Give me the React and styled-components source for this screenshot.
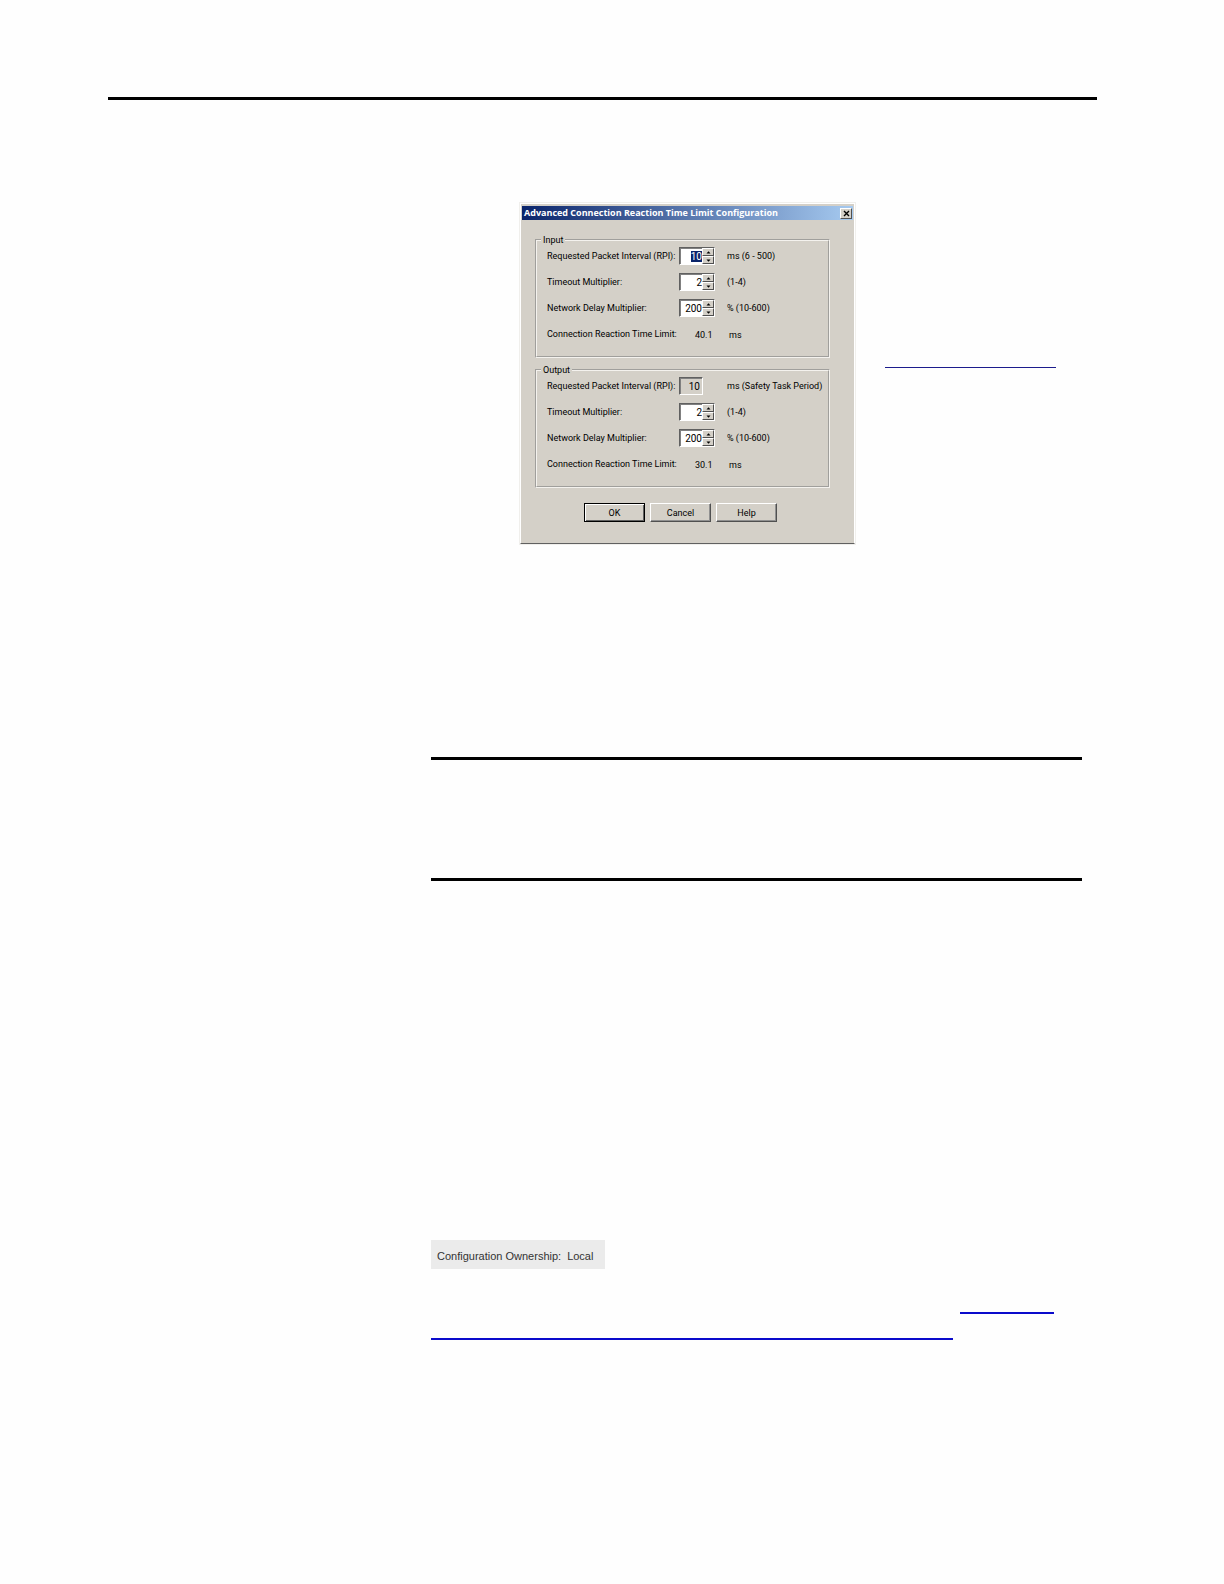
import React from 'react';
import styled, { createGlobalStyle, css } from 'styled-components';

const GlobalStyle = createGlobalStyle`
  * {
    box-sizing: border-box;
  }
  body {
    margin: 0;
    background: #fefefe;
    color: #000;
    font-family: Roboto, Arial, sans-serif;
  }
`;

const Page = styled.main`
  padding: 97px 127px 240px 108px;
`;

const Rule = styled.hr`
  height: 3px;
  margin: 0;
  border: 0;
  background: #000;
`;

const Column = styled.div`
  margin: 103px 15px 0 323px;
`;

const Figure = styled.section`
  display: flex;
  align-items: flex-start;
  gap: 30px;
  padding-left: 89px;
`;

const BlankLink = styled.a`
  display: block;
  height: ${props => props.$height}px;
  width: ${props => props.$width}px;
  border-bottom: ${props =>
    props.$thin ? '1px solid #1c1c8c' : '2px solid #0b0bcb'};
`;

const Note = styled.section`
  height: 124px;
  margin-top: 213px;
  border-top: 3px solid #000;
  border-bottom: 3px solid #000;
`;

const Ownership = styled.p`
  display: flex;
  align-items: center;
  gap: 6px;
  width: 174px;
  height: 29px;
  margin: 359px 0 0;
  padding: 2px 6px 0;
  background: #ebebeb;
  color: #333;
  font-family: 'Liberation Sans', Arial, sans-serif;
  font-size: 11px;
  white-space: nowrap;
`;

const Links = styled.nav`
  display: flex;
  flex-direction: column;
  padding: 19px 28px 0 0;

  > :first-child {
    align-self: flex-end;
  }
`;

const Dialog = styled.form`
  width: 335px;
  padding: 2px 1px 21px;
  border: 1px solid #fff;
  border-bottom-color: #606060;
  outline: 1px solid #f0efec;
  outline-offset: 0;
  background: #d4d0c8;
  font-size: 9px;
  line-height: 12px;
`;

const TitleBar = styled.header`
  display: flex;
  align-items: center;
  justify-content: space-between;
  height: 14px;
  padding: 0 1px 0 2px;
  background: linear-gradient(to right, #0a246a, #a6caf0);
`;

const Title = styled.h1`
  margin: 0;
  color: #fff;
  font-family: 'Open Sans', Arial, sans-serif;
  font-size: 9px;
  line-height: 12px;
  white-space: nowrap;
`;

const raised = css`
  border: 1px solid;
  border-color: #fff #505050 #505050 #fff;
  background: #d4d0c8;
  color: #000;
`;

const CloseButton = styled.button`
  ${raised}
  display: flex;
  align-items: center;
  justify-content: center;
  width: 12px;
  height: 11px;
  padding: 0;
`;

const Body = styled.div`
  display: flex;
  flex-direction: column;
  gap: 6px;
  padding: 14px 23px 0 13px;
`;

const Group = styled.fieldset`
  display: flex;
  flex-direction: column;
  gap: 8px;
  min-width: 0;
  margin: 0;
  padding: 1px 0 13px 10px;
  border: 2px groove #f4f2ee;
`;

const Legend = styled.legend`
  margin-left: -6px;
  padding: 0 2px;
`;

const Row = styled.div`
  display: grid;
  grid-template-columns: 132px 48px 1fr;
  align-items: center;
  height: 18px;
  white-space: nowrap;
`;

const sunken = css`
  border: 1px solid;
  border-color: #606060 #fff #fff #606060;
  box-shadow: inset 1px 1px #808080;
`;

const Spinner = styled.span`
  ${sunken}
  display: flex;
  width: 36px;
  height: 18px;
  background: #fff;
`;

const NumberInput = styled.input`
  flex: 1;
  min-width: 0;
  padding: 0;
  border: 0;
  outline: 0;
  background: transparent;
  color: #000;
  font: 10px Roboto, Arial, sans-serif;
  text-align: right;

  &::selection {
    background: #0a246a;
    color: #fff;
  }
`;

const ReadOnlyInput = styled(NumberInput)`
  ${sunken}
  width: 24px;
  height: 18px;
  padding-right: 2px;
  background: #d4d0c8;
`;

const Arrows = styled.span`
  display: flex;
  flex-direction: column;
  width: 12px;
`;

const ArrowButton = styled.button`
  ${raised}
  display: flex;
  flex: 1;
  align-items: center;
  justify-content: center;
  min-height: 0;
  padding: 0;
`;

const Result = styled.output`
  padding: 2px 0 0 16px;
`;

const ResultUnit = styled.span`
  padding: 2px 0 0 2px;
`;

const Actions = styled.footer`
  display: flex;
  gap: 5px;
  padding: 15px 0 0 62px;
`;

const ActionButton = styled.button`
  ${raised}
  width: 61px;
  height: 19px;
  padding: 0;
  box-shadow: inset -1px -1px #909090;
  font: 9px Roboto, Arial, sans-serif;

  ${props =>
    props.$default &&
    css`
      border-color: #000;
      box-shadow: inset 1px 1px #fff, inset -1px -1px #606060;
    `}
`;

const Arrow = ({ down }) => (
  <svg width="5" height="3" viewBox="0 0 5 3" aria-hidden="true">
    <path d={down ? 'M0.5 0.5h4L2.5 2.8z' : 'M0.5 2.5h4L2.5 0.2z'} />
  </svg>
);

const SpinField = ({ id, initialValue, selected }) => {
  const [value, setValue] = React.useState(initialValue);
  const inputRef = React.useRef(null);

  React.useEffect(() => {
    if (selected) {
      inputRef.current.focus();
      inputRef.current.select();
    }
  }, [selected]);

  const step = amount => setValue(current => Number(current) + amount);

  return (
    <Spinner>
      <NumberInput
        id={id}
        ref={inputRef}
        value={value}
        onChange={event => setValue(event.target.value)}
      />
      <Arrows>
        <ArrowButton type="button" aria-label="Up" onClick={() => step(1)}>
          <Arrow />
        </ArrowButton>
        <ArrowButton type="button" aria-label="Down" onClick={() => step(-1)}>
          <Arrow down />
        </ArrowButton>
      </Arrows>
    </Spinner>
  );
};

const LimitGroup = ({ name, readOnlyInterval, intervalUnit, limit }) => {
  const id = name.toLowerCase();

  return (
    <Group>
      <Legend>{name}</Legend>
      <Row>
        <label htmlFor={`${id}-rpi`}>Requested Packet Interval (RPI):</label>
        {readOnlyInterval ? (
          <ReadOnlyInput id={`${id}-rpi`} value="10" readOnly />
        ) : (
          <SpinField id={`${id}-rpi`} initialValue="10" selected />
        )}
        <span>{intervalUnit}</span>
      </Row>
      <Row>
        <label htmlFor={`${id}-timeout`}>Timeout Multiplier:</label>
        <SpinField id={`${id}-timeout`} initialValue="2" />
        <span>(1-4)</span>
      </Row>
      <Row>
        <label htmlFor={`${id}-delay`}>Network Delay Multiplier:</label>
        <SpinField id={`${id}-delay`} initialValue="200" />
        <span>% (10-600)</span>
      </Row>
      <Row>
        <label htmlFor={`${id}-limit`}>Connection Reaction Time Limit:</label>
        <Result id={`${id}-limit`}>{limit}</Result>
        <ResultUnit>ms</ResultUnit>
      </Row>
    </Group>
  );
};

const ReactionTimeDialog = () => (
  <Dialog onSubmit={event => event.preventDefault()}>
    <TitleBar>
      <Title>Advanced Connection Reaction Time Limit Configuration</Title>
      <CloseButton type="button" aria-label="Close">
        <svg width="7" height="7" viewBox="0 0 7 7" aria-hidden="true">
          <path d="M1 1l5 5M6 1L1 6" stroke="#000" strokeWidth="1.4" />
        </svg>
      </CloseButton>
    </TitleBar>
    <Body>
      <LimitGroup name="Input" intervalUnit="ms (6 - 500)" limit="40.1" />
      <LimitGroup
        name="Output"
        intervalUnit="ms (Safety Task Period)"
        limit="30.1"
        readOnlyInterval
      />
    </Body>
    <Actions>
      <ActionButton $default>OK</ActionButton>
      <ActionButton type="button">Cancel</ActionButton>
      <ActionButton type="button">Help</ActionButton>
    </Actions>
  </Dialog>
);

const App = () => (
  <>
    <GlobalStyle />
    <Page>
      <Rule />
      <Column>
        <Figure>
          <ReactionTimeDialog />
          <BlankLink
            href="#reaction-time"
            aria-label="Reaction time"
            $width={171}
            $height={165}
            $thin
          />
        </Figure>
        <Note />
        <Ownership>
          <span>Configuration Ownership:</span>
          <span>Local</span>
        </Ownership>
        <Links>
          <BlankLink
            href="#ownership"
            aria-label="Ownership"
            $width={94}
            $height={26}
          />
          <BlankLink
            href="#reset-ownership"
            aria-label="Reset ownership"
            $width={522}
            $height={26}
          />
        </Links>
      </Column>
    </Page>
  </>
);

export default App;
